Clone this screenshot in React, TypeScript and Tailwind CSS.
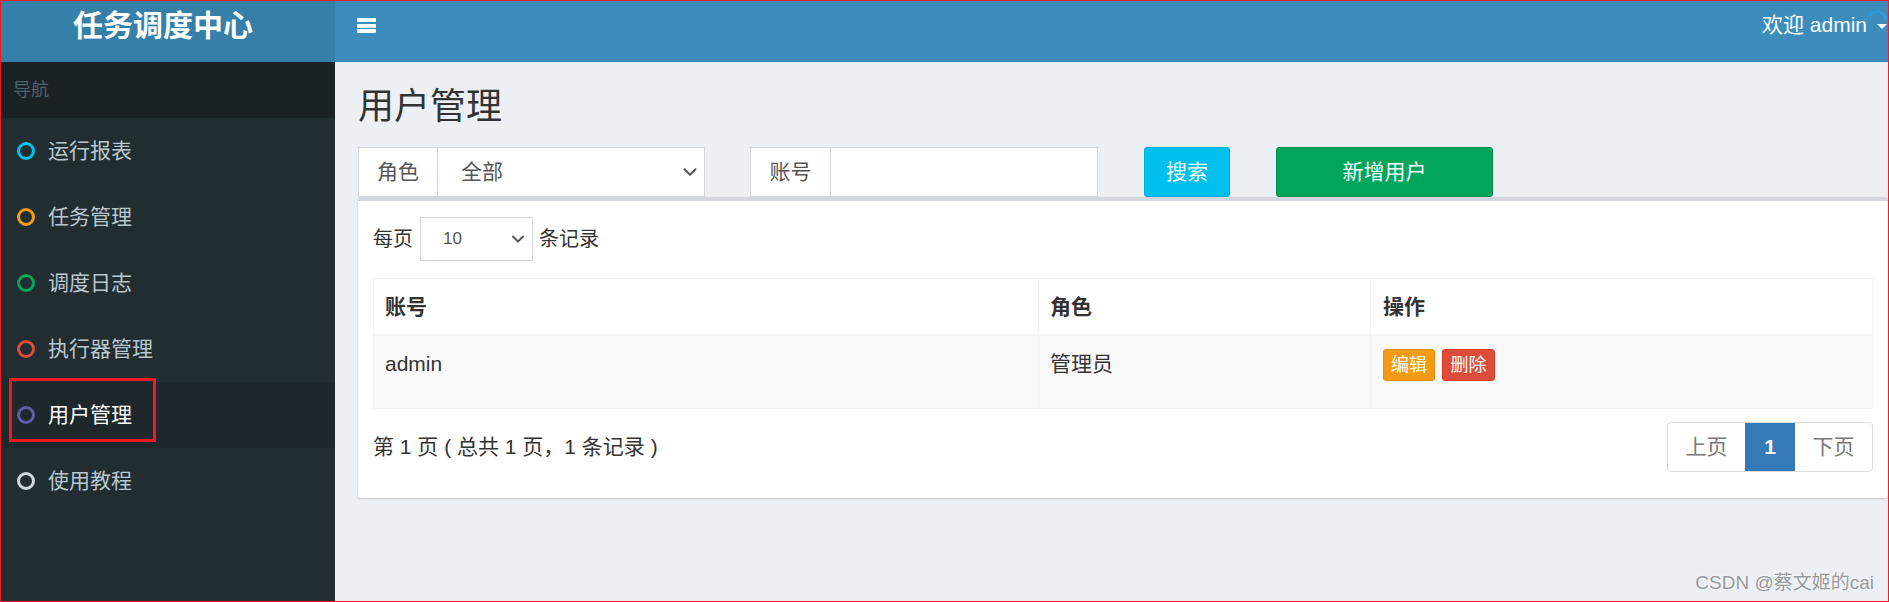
import { ChevronDown } from "lucide-react";

const menu = [
  { label: "运行报表", ring: "border-[#00c0ef]", active: false },
  { label: "任务管理", ring: "border-[#f39c12]", active: false },
  { label: "调度日志", ring: "border-[#00a65a]", active: false },
  { label: "执行器管理", ring: "border-[#dd4b39]", active: false },
  { label: "用户管理", ring: "border-[#605ca8]", active: true },
  { label: "使用教程", ring: "border-[#d2d6de]", active: false },
];

function Sidebar() {
  return (
    <div className="w-[334px] shrink-0 bg-[#222d32]">
      <div className="h-[56px] bg-[#1a2226] pl-[12px] flex items-center text-[18px] text-[#4b646f]">
        导航
      </div>
      {menu.map((item) => (
        <div
          key={item.label}
          className={
            item.active
              ? "relative h-[66px] flex items-center pl-[16px] bg-[#1e282c] text-white"
              : "relative h-[66px] flex items-center pl-[16px] text-[#b8c7ce]"
          }
        >
          <span className={`w-[18px] h-[18px] rounded-full border-[3px] ${item.ring}`} />
          <span className="ml-[13px] text-[21px] leading-[30px]">{item.label}</span>
          {item.active && (
            // screenshot annotation box
            <div className="absolute left-[8px] top-[-4px] w-[147px] h-[64px] border-[3px] border-[#ed1c24]" />
          )}
        </div>
      ))}
    </div>
  );
}

function Header() {
  return (
    <div className="h-[61px] flex shrink-0">
      <div className="w-[334px] bg-[#367fa9] flex justify-center">
        <span className="text-white font-bold text-[30px] leading-[50px] pr-[10px]">任务调度中心</span>
      </div>
      <div className="flex-1 bg-[#3c8dbc] flex relative">
        <div className="ml-[22px] mt-[17px] flex flex-col gap-[1.5px]">
          <span className="w-[19px] h-[4px] bg-white rounded-[1px]" />
          <span className="w-[19px] h-[4px] bg-white rounded-[1px]" />
          <span className="w-[19px] h-[4px] bg-white rounded-[1px]" />
        </div>
        <div className="ml-auto flex items-center h-[48px] text-white text-[21px]">
          <span>欢迎 admin</span>
          <span className="ml-[10px] mr-[1px] mt-[3px] w-0 h-0 border-l-[5px] border-r-[5px] border-t-[5px] border-l-transparent border-r-transparent border-t-white" />
        </div>
        <svg className="absolute right-[0px] top-[8px]" width="22" height="22" viewBox="0 0 22 22">
          <path d="M3.5 7 A8.5 8.5 0 0 1 19.5 11" fill="none" stroke="#2d9be0" strokeWidth="2.5" />
        </svg>
      </div>
    </div>
  );
}

function FilterBar() {
  return (
    <div className="mt-[15px] h-[50px] flex text-[21px]">
      <div className="w-[347px] flex border border-[#d2d6de] bg-white">
        <div className="w-[79px] border-r border-[#d2d6de] flex items-center justify-center text-[#555]">角色</div>
        <div className="flex-1 flex items-center pl-[23px] pr-[3px] text-[#555]">
          <span>全部</span>
          <ChevronDown className="ml-auto text-[#555]" size={22} strokeWidth={2.2} />
        </div>
      </div>
      <div className="ml-[45px] w-[348px] flex border border-[#d2d6de] bg-white">
        <div className="w-[80px] border-r border-[#d2d6de] flex items-center justify-center text-[#555]">账号</div>
        <div className="flex-1" />
      </div>
      <button className="ml-[46px] w-[86px] rounded-[3px] bg-[#00c0ef] border border-[#00acd6] text-white">搜索</button>
      <button className="ml-[46px] w-[217px] rounded-[3px] bg-[#00a65a] border border-[#008d4c] text-white">新增用户</button>
    </div>
  );
}

function UserTable() {
  return (
    <div className="mt-[17px] border border-[#f4f4f4] text-[21px] text-[#333]">
      <div className="grid grid-cols-[665px_332px_1fr] border-b-2 border-[#f4f4f4]">
        <div className="h-[55px] pl-[11px] pt-[13px] leading-[30px] font-bold border-r border-[#f4f4f4]">账号</div>
        <div className="h-[55px] pl-[11px] pt-[13px] leading-[30px] font-bold border-r border-[#f4f4f4]">角色</div>
        <div className="h-[55px] pl-[12px] pt-[13px] leading-[30px] font-bold">操作</div>
      </div>
      <div className="grid grid-cols-[665px_332px_1fr] bg-[#f9f9f9]">
        <div className="h-[72px] pl-[11px] pt-[13px] leading-[30px] border-r border-[#f4f4f4]">admin</div>
        <div className="h-[72px] pl-[11px] pt-[13px] leading-[30px] border-r border-[#f4f4f4]">管理员</div>
        <div className="h-[72px] pl-[12px] pt-[13px] flex items-start gap-[7px]">
          <button className="w-[52px] h-[32px] rounded-[3px] bg-[#f39c12] border border-[#e08e0b] text-white text-[18px]">编辑</button>
          <button className="w-[53px] h-[32px] rounded-[3px] bg-[#dd4b39] border border-[#d73925] text-white text-[18px]">删除</button>
        </div>
      </div>
    </div>
  );
}

export default function App() {
  return (
    <div className="w-[1889px] h-[602px] border border-[#ed1c24] flex flex-col overflow-hidden relative font-['Liberation_Sans','Noto_Sans_CJK_SC',sans-serif]">
      <Header />
      <div className="flex-1 flex min-h-0">
        <Sidebar />
        <div className="flex-1 bg-[#ecf0f5] pl-[23px] pt-[20px] relative">
          <h1 className="h-[50px] leading-[50px] text-[36px] text-[#333]">用户管理</h1>
          <FilterBar />
          <div className="bg-white border-t-4 border-[#d2d6de] rounded-[3px] shadow-[0_1px_2px_rgba(0,0,0,0.15)] px-[15px] pt-[16px] pb-[26px]">
            <div className="flex items-center text-[20px] text-[#333]">
              <span>每页</span>
              <div className="ml-[7px] w-[113px] h-[44px] border border-[#d2d6de] flex items-center pl-[22px] pr-[4px] text-[17px] text-[#555]">
                <span>10</span>
                <ChevronDown className="ml-auto text-[#555]" size={20} strokeWidth={2.2} />
              </div>
              <span className="ml-[6px]">条记录</span>
            </div>
            <UserTable />
            <div className="mt-[13px] h-[50px] flex items-center">
              <span className="text-[21px] text-[#333]">第 1 页 ( 总共 1 页，1 条记录 )</span>
              <div className="ml-auto flex h-[50px] border border-[#ddd] rounded-[4px] overflow-hidden text-[21px]">
                <div className="w-[77px] flex items-center justify-center text-[#777]">上页</div>
                <div className="w-[50px] flex items-center justify-center bg-[#337ab7] text-white font-bold">1</div>
                <div className="w-[77px] flex items-center justify-center text-[#777]">下页</div>
              </div>
            </div>
          </div>
          <div className="absolute right-[14px] bottom-[8px] leading-[20px] text-[19px] text-[#999] [text-shadow:0_0_2px_#fff]">
            CSDN @蔡文姬的cai
          </div>
        </div>
      </div>
    </div>
  );
}
